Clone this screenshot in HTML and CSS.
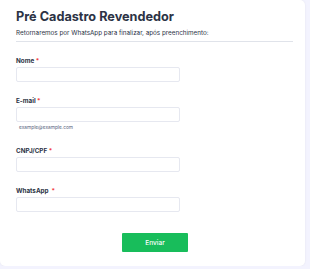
FILE: index.html
```html
<!DOCTYPE html>
<html lang="pt-BR">
<head>
    <meta charset="UTF-8">
    <meta name="viewport" content="width=device-width, initial-scale=1.0">
    <title>Pré Cadastro Revendedor</title>
    <link rel="stylesheet" href="styles.css">
</head>
<body>
    <form class="card">
        <div class="head">
            <h1>Pré Cadastro Revendedor</h1>
            <p>Retornaremos por WhatsApp para finalizar, após preenchimento:</p>
        </div>

        <div class="field">
            <label>Nome <span class="req">*</span></label>
            <input type="text">
        </div>
        <div class="field">
            <label>E-mail <span class="req">*</span></label>
            <input type="email">
            <small>example@example.com</small>
        </div>
        <div class="field">
            <label>CNPJ/CPF <span class="req">*</span></label>
            <input type="text">
        </div>
        <div class="field">
            <label>WhatsApp &nbsp;<span class="req">*</span></label>
            <input type="text">
        </div>

        <div class="actions">
            <button type="button">Enviar</button>
        </div>
    </form>
</body>
</html>
```

FILE: styles.css
```css
body {
    font-family: 'Inter', 'Liberation Sans', sans-serif;
    background-color: #f3f3fe;
    margin: 0;
    padding: 0;
    color: #2c3345;
}
.card {
    width: 305px;
    height: 266px;
    box-sizing: border-box;
    background-color: #fff;
    border-radius: 0 5px 5px 5px;
    box-shadow: 0 0 2px rgba(0, 0, 0, 0.08);
    padding: 9px 16px 0 16px;
}
.head {
    width: 277px;
    border-bottom: 1px solid #e0e3ea;
    padding-bottom: 4px;
    margin-bottom: 15px;
}
.head h1 {
    font-size: 12.7px;
    font-weight: 700;
    margin: 0 0 4px 0;
    line-height: 16px;
}
.head p {
    font-size: 6.3px;
    margin: 0;
    line-height: 8px;
}
.field {
    display: flex;
    flex-direction: column;
    margin-bottom: 15px;
}
.field label {
    font-size: 6.3px;
    font-weight: 700;
    line-height: 8px;
    margin-bottom: 2px;
}
.req {
    color: #f23a3c;
}
.field input {
    width: 164px;
    height: 15px;
    box-sizing: border-box;
    border: 1px solid #e6e8f0;
    border-radius: 2px;
    margin: 0;
    padding: 0;
}
.field small {
    font-size: 4.8px;
    margin: 1px 0 1px 3px;
    line-height: 8px;
    color: #57647e;
}
.actions {
    display: flex;
    justify-content: center;
    padding-left: 5px;
    padding-top: 6px;
}
.actions button {
    width: 66px;
    height: 19px;
    background-color: #18bd5b;
    color: #fff;
    border: none;
    border-radius: 1px;
    font-family: inherit;
    font-size: 6.5px;
    font-weight: 500;
}
```
